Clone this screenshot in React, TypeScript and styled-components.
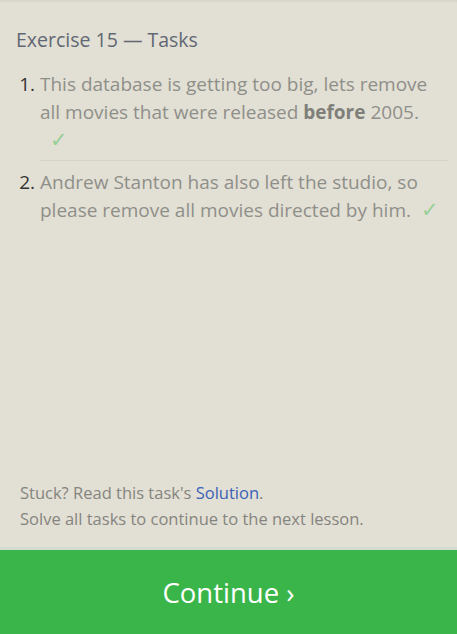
import React from "react";
import styled, { createGlobalStyle } from "styled-components";

const Global = createGlobalStyle`
  html, body { margin: 0; padding: 0; background: #e2dfd4; }
  body { font-family: "Open Sans", "Noto Sans", sans-serif; }
`;

const Panel = styled.div`
  height: 634px;
  display: flex;
  flex-direction: column;
  background: #e2dfd4;
  box-shadow: inset 0 3px 3px -2px rgba(0, 0, 0, 0.08);
`;

const Title = styled.h3`
  margin: 0;
  padding: 28px 16px 0;
  font-size: 19.5px;
  line-height: 24px;
  font-weight: 400;
  color: #5f6873;
`;

const TaskList = styled.ol`
  margin: 18px 9px 0 0;
  padding: 0 0 0 40px;
  flex: 1;
`;

const Task = styled.li<{ $last?: boolean }>`
  font-size: 19px;
  line-height: 28px;
  color: #333;
  padding: ${(p) => (p.$last ? "7px 6px 0 0" : "0 6px 6px 0")};
  border-bottom: ${(p) => (p.$last ? "none" : "1px solid #d6d3c9")};
  &::marker { color: #333; }
`;

const TaskText = styled.span`
  color: #8f8f8a;
  b { color: #7f7f7a; font-weight: 700; }
`;

const Check = styled.span`
  display: inline-block;
  margin-left: 10px;
  color: #96d096;
  font-family: "DejaVu Sans", sans-serif;
  font-size: 21px;
  line-height: 28px;
`;

const Footer = styled.div`
  padding: 0 20px 15px;
  font-size: 16.5px;
  line-height: 26px;
  color: #858580;
  border-bottom: 3px solid #d3dcd2;
`;

const SolutionLink = styled.a`
  color: #3a62b8;
  text-decoration: none;
`;

const ContinueButton = styled.button`
  height: 84px;
  border: none;
  background: #3ab54a;
  color: #fff;
  font-family: "Open Sans", "Noto Sans", sans-serif;
  font-size: 27.5px;
  cursor: pointer;
  width: 100%;
`;

export default function App() {
  return (
    <>
      <Global />
      <Panel>
        <Title>Exercise 15 — Tasks</Title>
        <TaskList>
          <Task>
            <TaskText>
              This database is getting too big, lets remove all movies that were
              released <b>before</b> 2005.
            </TaskText>
            <Check>✓</Check>
          </Task>
          <Task $last>
            <TaskText>
              Andrew Stanton has also left the studio, so please remove all movies
              directed by him.
            </TaskText>
            <Check>✓</Check>
          </Task>
        </TaskList>
        <Footer>
          Stuck? Read this task's <SolutionLink href="#">Solution</SolutionLink>.
          <br />
          Solve all tasks to continue to the next lesson.
        </Footer>
        <ContinueButton>Continue ›</ContinueButton>
      </Panel>
    </>
  );
}
